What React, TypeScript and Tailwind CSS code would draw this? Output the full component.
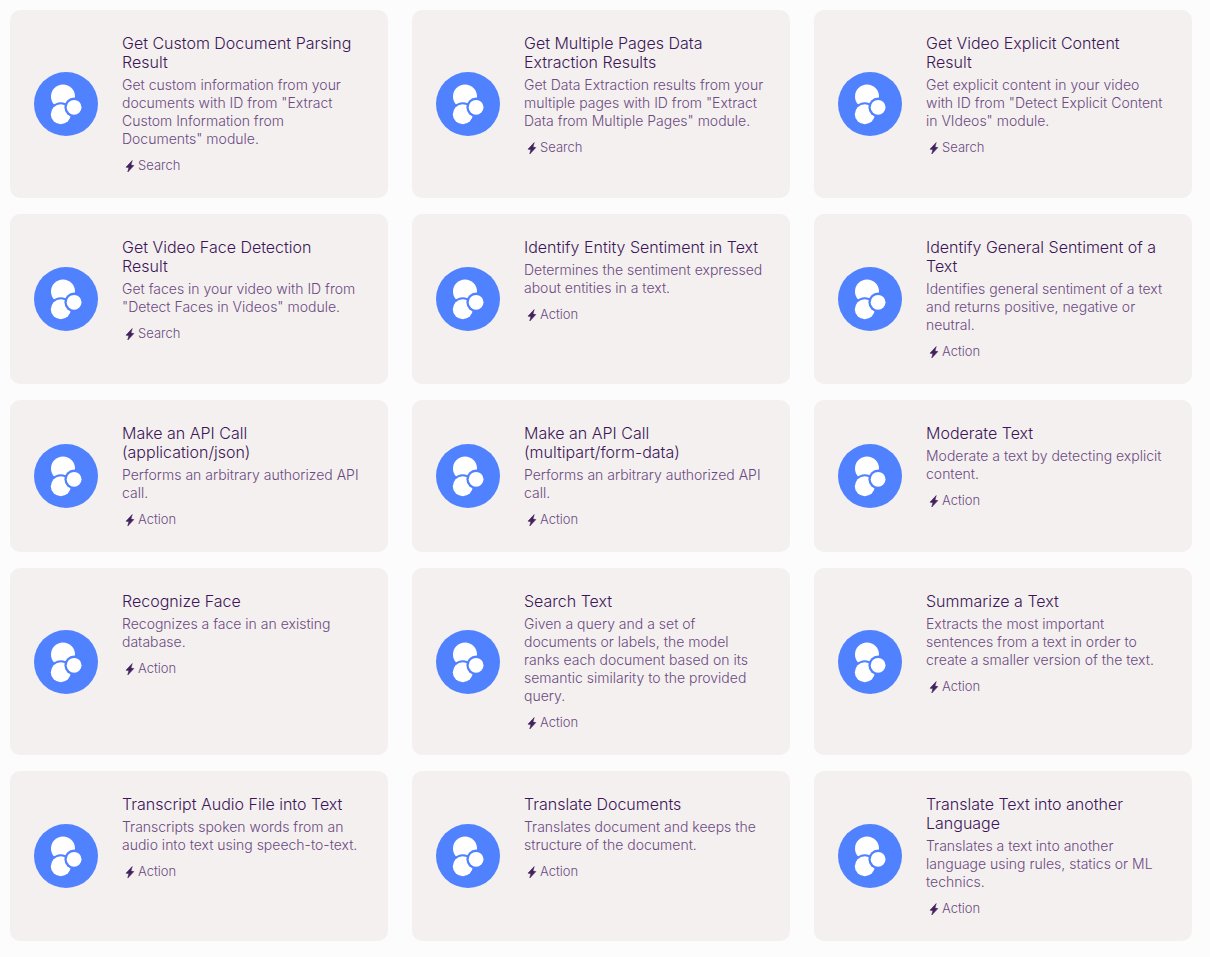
type Module = {
  title: string;
  description: string;
  kind: "Search" | "Action";
};

const modules: Module[] = [
  {
    title: "Get Custom Document Parsing Result",
    description:
      'Get custom information from your documents with ID from "Extract Custom Information from Documents" module.',
    kind: "Search",
  },
  {
    title: "Get Multiple Pages Data Extraction Results",
    description:
      'Get Data Extraction results from your multiple pages with ID from "Extract Data from Multiple Pages" module.',
    kind: "Search",
  },
  {
    title: "Get Video Explicit Content Result",
    description:
      'Get explicit content in your video with ID from "Detect Explicit Content in VIdeos" module.',
    kind: "Search",
  },
  {
    title: "Get Video Face Detection Result",
    description:
      'Get faces in your video with ID from "Detect Faces in Videos" module.',
    kind: "Search",
  },
  {
    title: "Identify Entity Sentiment in Text",
    description: "Determines the sentiment expressed about entities in a text.",
    kind: "Action",
  },
  {
    title: "Identify General Sentiment of a Text",
    description:
      "Identifies general sentiment of a text and returns positive, negative or neutral.",
    kind: "Action",
  },
  {
    title: "Make an API Call (application/json)",
    description: "Performs an arbitrary authorized API call.",
    kind: "Action",
  },
  {
    title: "Make an API Call (multipart/form-data)",
    description: "Performs an arbitrary authorized API call.",
    kind: "Action",
  },
  {
    title: "Moderate Text",
    description: "Moderate a text by detecting explicit content.",
    kind: "Action",
  },
  {
    title: "Recognize Face",
    description: "Recognizes a face in an existing database.",
    kind: "Action",
  },
  {
    title: "Search Text",
    description:
      "Given a query and a set of documents or labels, the model ranks each document based on its semantic similarity to the provided query.",
    kind: "Action",
  },
  {
    title: "Summarize a Text",
    description:
      "Extracts the most important sentences from a text in order to create a smaller version of the text.",
    kind: "Action",
  },
  {
    title: "Transcript Audio File into Text",
    description:
      "Transcripts spoken words from an audio into text using speech-to-text.",
    kind: "Action",
  },
  {
    title: "Translate Documents",
    description:
      "Translates document and keeps the structure of the document.",
    kind: "Action",
  },
  {
    title: "Translate Text into another Language",
    description:
      "Translates a text into another language using rules, statics or ML technics.",
    kind: "Action",
  },
];

function Logo() {
  return (
    <svg viewBox="0 0 64 64" className="size-16 shrink-0" aria-hidden="true">
      <circle cx="32" cy="32" r="32" fill="#5081ff" />
      <circle cx="29" cy="24.6" r="12" fill="#fff" />
      <circle cx="26.8" cy="42.2" r="12" fill="#5081ff" />
      <circle cx="26.8" cy="42.2" r="10" fill="#fff" />
      <circle cx="40.1" cy="35.3" r="9.7" fill="#5081ff" />
      <circle cx="40.1" cy="35.3" r="7.4" fill="#fff" />
    </svg>
  );
}

function Bolt() {
  return (
    <svg viewBox="0 0 16 18" className="h-[18px] w-4" aria-hidden="true">
      <path
        d="M10.2 4.6 4 11.2 6.9 11.6 5.8 16 11.8 9.6 8.9 9.1Z"
        fill="#42215c"
        stroke="#42215c"
        strokeWidth="0.6"
        strokeLinejoin="round"
      />
    </svg>
  );
}

function ModuleCard({ title, description, kind }: Module) {
  return (
    <article className="flex items-center gap-6 rounded-[10px] bg-[#f4f0ef] p-6">
      <Logo />
      <div className="min-w-0 flex-1 self-stretch">
        <h3 className="pr-1 text-[16px] leading-[19px] text-[#3c1658]">
          {title}
        </h3>
        <p className="mt-1 text-[14px] leading-[18px] text-[#6b4a82]">
          {description}
        </p>
        <div className="mt-2 flex items-center text-[13px] leading-[18px] text-[#6b4a82]">
          <Bolt />
          <span>{kind}</span>
        </div>
      </div>
    </article>
  );
}

export default function App() {
  return (
    <main className="min-h-screen bg-[#fcfcfc] py-[10px] pr-[18px] pl-[10px] font-['Inter',sans-serif] font-light">
      <div className="grid grid-cols-3 gap-x-6 gap-y-4">
        {modules.map((module) => (
          <ModuleCard key={module.title} {...module} />
        ))}
      </div>
    </main>
  );
}
